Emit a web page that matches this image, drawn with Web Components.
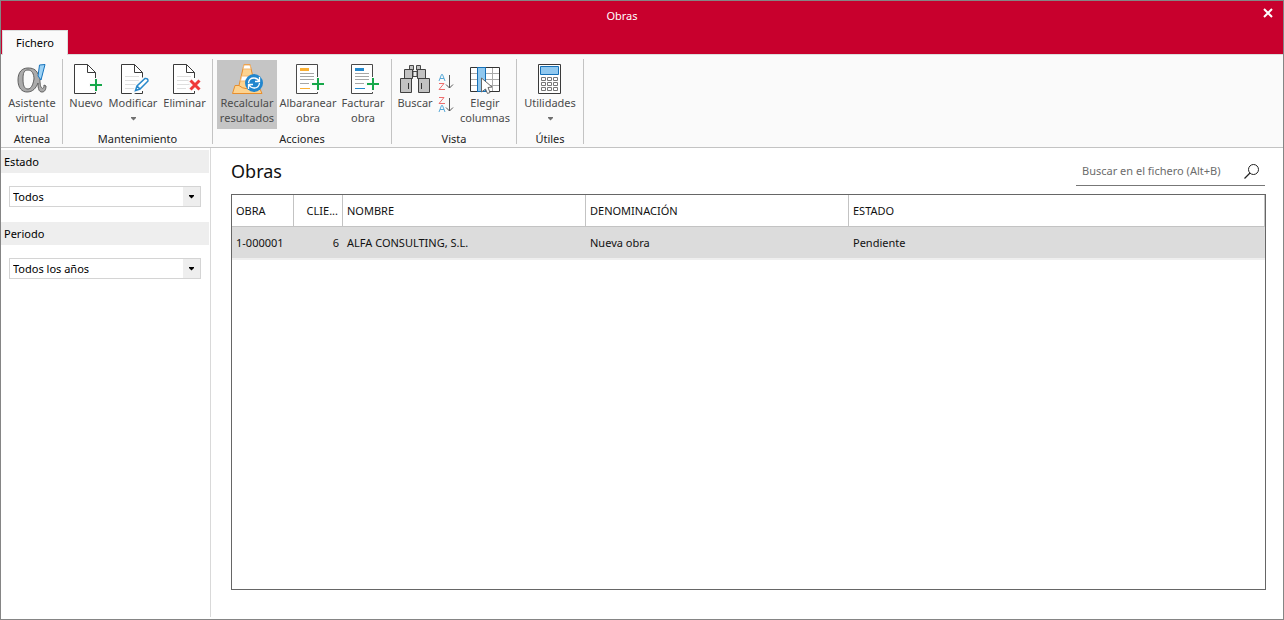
<!DOCTYPE html>
<html lang="es">
<head>
<meta charset="utf-8">
<meta name="viewport" content="width=device-width, initial-scale=1">
<title>Obras</title>
<style>
  html, body { height: 100%; margin: 0; }
  body {
    --brand: #c8002d;
    --line: #c3c3c3;
    --frame: #858585;
    font: 11px/15px "Noto Sans", "Open Sans", sans-serif;
    color: #111;
    background: #fff;
  }
</style>
</head>
<body>
<works-app></works-app>
<script>
const define = (name, html, setup) => {
  const template = document.createElement('template');
  template.innerHTML = html;
  customElements.define(name, class extends HTMLElement {
    constructor() {
      super();
      this.attachShadow({ mode: 'open' }).append(template.content.cloneNode(true));
    }
    connectedCallback() { if (setup) setup(this, this.shadowRoot); }
  });
};

const page = '<path d="M4.500 1.500H17.500L25.500 9.500V30.500H4.500Z" fill="#fff"/><path d="M25.500 15V9.500L17.500 1.500H4.500V30.500H25.500V28" fill="none" stroke="#3a3a3a"/><path d="M17.500 1.500V9.500H25.500" fill="none" stroke="#3a3a3a"/>';
const textLines = '<path d="M8 13.500H22M8 17.500H22M8 21.500H21M8 25.500H17" stroke="#dedede" fill="none"/>';
const invoice = (c) => `<path d="M25.500 18V1.500H4.500V30.500H25.500V26" fill="#fff" stroke="#4a4a4a"/><rect x="8" y="5" width="9" height="3" fill="${c}"/><path d="M8 10.500H22M8 13.500H22M8 16.500H22M8 20.500H17" stroke="#a6a6a6"/><path d="M8 25.500H18" stroke="${c}"/><path d="M26 14V29M18 21H33" stroke="#fafafa" stroke-width="4"/><path d="M26 15V27M20 21H32" stroke="#16a84a" stroke-width="2"/>`;

const icons = {
  close: [12, 12, '<path d="M2 2L10 10M10 2L2 10" stroke="#fff" stroke-width="2"/>'],
  alpha: [32, 32, '<path d="M22 11C20 6 16 5 12 5C6 5 2 9 2 17C2 25 6 29 11 29C17 29 20 25 22 20C22 26 23 29 26 29C29 29 30 26 30 23L28 22C28 25 27 26 26 25C24 24 24 19 24 16L25 11ZM12 7C16 7 18 11 18 16C17 22 15 26 12 26C8 26 7 22 7 16C7 10 8 7 12 7Z" fill="#ababab" stroke="#606060" fill-rule="evenodd"/><path d="M23.500 2L29 1.500L25 17L22 13Z" fill="#9dd2f5" stroke="#1673bd"/>'],
  new: [32, 32, page + '<path d="M26 15V29M19 22H32" stroke="#fafafa" stroke-width="4"/><path d="M26 16V28M20 22H32" stroke="#16a84a" stroke-width="2"/>'],
  edit: [32, 32, page + textLines + '<path d="M18 28L21 21L28 15L30 17L23 25Z" fill="#fff" stroke="#fafafa" stroke-width="4"/><path d="M18.500 27.500L20 23L28 15.500Q31 15 31 18L23 26ZM20 23L23 26" fill="#fff" stroke="#2788cb" stroke-width="1.500"/>'],
  delete: [32, 32, page + textLines + '<path d="M20 17L31 27M31 17L20 27" stroke="#fafafa" stroke-width="6"/><path d="M21.500 17.500L30.500 26.500M30.500 17.500L21.500 26.500" stroke="#ef3939" stroke-width="3"/>'],
  recalc: [32, 32, '<path d="M1.500 30.500L4 22.500H8L13 1.500H19L24 22.500L29 26L31 30.500Z" fill="#fdd38f" stroke="#e78e2d"/><path d="M13 2L12 6H20L19 2ZM10.500 13L9.500 18H23L22 13Z" fill="#fff" stroke="#f1b673"/><path d="M8 22.500Q14 28 24 24" fill="none" stroke="#e78e2d"/><circle cx="23" cy="20" r="9" fill="#2186ce"/><path d="M17.500 20Q18 15 23 15Q26 15 28 18M28.500 14V18.500H24M28.500 20Q28 25 23 25Q20 25 18 22M17.500 26V21.500H22" fill="none" stroke="#fff" stroke-width="1.300"/>'],
  delivery: [32, 32, invoice('#fbb034')],
  invoice: [32, 32, invoice('#2488cc')],
  binoculars: [32, 32, '<path d="M14 8.500H18V13.500H14Z" fill="#eee" stroke="#4a4a4a"/><path d="M10.500 2.500H14.500V7H10.500ZM17.500 2.500H21.500V7H17.500Z" fill="#c4c4c4" stroke="#4a4a4a"/><path d="M5.500 6.500H13.500V15.500H5.500ZM18.500 6.500H26.500V15.500H18.500ZM1.500 15.500H12.500V29.500H1.500ZM19.500 15.500H30.500V29.500H19.500Z" fill="#c2c2c2" stroke="#404040"/><path d="M9.500 20V26M22.500 20V26" stroke="#333"/>'],
  sortaz: [16, 18, '<path d="M1 7L3.500 0.500H4.500L7 7M2 4.500H6" fill="none" stroke="#58a9d8"/><path d="M1 9.500H6L1 15.500H7" fill="none" stroke="#ee6d6d"/><path d="M11.500 1V14M8 10.500L11.500 14L15 10.500" fill="none" stroke="#555"/>'],
  sortza: [16, 18, '<path d="M1 0.500H6L1 6.500H7" fill="none" stroke="#ee6d6d"/><path d="M1 15L3.500 8.500H4.500L7 15M2 12.500H6" fill="none" stroke="#58a9d8"/><path d="M11.500 1V14M8 10.500L11.500 14L15 10.500" fill="none" stroke="#555"/>'],
  columns: [32, 32, '<path d="M1.500 4.500H30.500V28.500H1.500Z" fill="#fff" stroke="#333"/><path d="M2 10.500H30M2 16.500H30M2 22.500H30M23.500 5V28" stroke="#aaa"/><path d="M8.500 4.500H16.500V28.500H8.500Z" fill="#90c8ef" stroke="#1570b8"/><path d="M12.500 15L23 24L19 24.500L21 29.500L18.500 30.500L16.500 26L12.500 29Z" fill="#fff" stroke="#666"/>'],
  calculator: [32, 32, '<path d="M4.500 1.500H26.500V30.500H4.500Z" fill="#fff" stroke="#3a3a3a"/><path d="M6.500 3.500H24.500V11.500H6.500Z" fill="#90c8ef" stroke="#1570b8"/><path d="M7.500 14.500H11.500V17.500H7.500ZM13.500 14.500H17.500V17.500H13.500ZM19.500 14.500H23.500V17.500H19.500ZM7.500 19.500H11.500V22.500H7.500ZM13.500 19.500H17.500V22.500H13.500ZM19.500 19.500H23.500V22.500H19.500ZM7.500 24.500H11.500V27.500H7.500ZM13.500 24.500H17.500V27.500H13.500ZM19.500 24.500H23.500V27.500H19.500Z" fill="none" stroke="#777"/>'],
  search: [18, 18, '<circle cx="10.500" cy="7.500" r="5" fill="none" stroke="#222"/><path d="M7 11L1.500 16.500" stroke="#222" stroke-width="1.200"/>'],
  caret: [7, 4, '<path d="M1 0H6V1L3.500 3.500L1 1Z" fill="currentColor"/>']
};

define('app-icon', `<style>:host{display:block;flex:none}svg{display:block;overflow:visible}</style><svg aria-hidden="true"></svg>`,
  (host, root) => {
    const [w, h, body] = icons[host.getAttribute('name')];
    const svg = root.querySelector('svg');
    svg.setAttribute('width', w);
    svg.setAttribute('height', h);
    svg.setAttribute('viewBox', `0 0 ${w} ${h}`);
    svg.innerHTML = body;
  });

define('title-bar', `<style>
  :host{display:grid;grid-template-columns:40px 1fr 40px 40px;height:29px;background:var(--brand);color:#fff}
  h1{grid-column:1 / 4;margin:0;font:inherit;line-height:29px;text-align:center}
  button{border:0;padding:0 9px 6px 0;background:none;display:flex;align-items:center;justify-content:flex-end}
</style><h1><slot></slot></h1><button aria-label="Cerrar"><app-icon name="close"></app-icon></button>`);

define('ribbon-tabs', `<style>
  :host{display:flex;height:24px;padding-left:1px;background:var(--brand);border-bottom:1px solid #ddd}
  button{box-sizing:border-box;height:25px;padding:0 0 2px;width:66px;border:1px solid #ddd;border-bottom:0;background:#fafafa;color:#000;font:inherit}
</style><div role="tablist"><button role="tab" aria-selected="true"><slot></slot></button></div>`);

define('ribbon-group', `<style>
  :host{display:flex;flex-direction:column;padding:0 4px;margin:4px 0 3px;border-right:1px solid var(--line)}
  div{display:flex;flex:none;height:74px;align-items:flex-start}
  h2{margin:0;font:inherit;line-height:11px;text-align:center;color:#222}
</style><div><slot></slot></div><h2></h2>`,
  (host, root) => { root.querySelector('h2').textContent = host.getAttribute('label'); });

define('ribbon-button', `<style>
  :host{display:block}
  button{box-sizing:border-box;width:100%;height:69px;margin-top:1px;padding:3px 0 0;border:0;background:none;font:inherit;color:#4b4b4b;display:flex;flex-direction:column;align-items:center;white-space:nowrap}
  :host([active]) button{background:#c5c5c5}
  span{display:block;text-align:center}
  .caret{margin-top:7px;color:#707070}
</style><button><span><slot></slot></span></button>`,
  (host, root) => {
    const button = root.querySelector('button');
    const icon = document.createElement('app-icon');
    icon.setAttribute('name', host.getAttribute('icon'));
    button.prepend(icon);
    if (host.hasAttribute('menu')) {
      const caret = document.createElement('app-icon');
      caret.setAttribute('name', 'caret');
      caret.className = 'caret';
      button.append(caret);
    }
  });

define('sort-buttons', `<style>
  :host{display:flex;flex-direction:column;align-items:center;gap:5px;padding-top:15px;width:24px}
  button{border:0;padding:0;background:none}
</style><button aria-label="Orden ascendente"><app-icon name="sortaz"></app-icon></button><button aria-label="Orden descendente"><app-icon name="sortza"></app-icon></button>`);

define('app-ribbon', `<style>
  :host{display:flex;background:#fafafa;border-bottom:1px solid var(--line);height:92px}
  .xs{width:38px}.s{width:47px}.m{width:48px}.l{width:54px}.menu{width:56px}.xl{width:58px}.xxl{width:62px}
  .active{width:60px}
  .first{padding:0 1px 0 2px}
</style>
<ribbon-group class="first" label="Atenea"><ribbon-button class="xl" icon="alpha">Asistente<br>virtual</ribbon-button></ribbon-group>
<ribbon-group label="Mantenimiento">
  <ribbon-button class="xs" icon="new">Nuevo</ribbon-button>
  <ribbon-button class="menu" icon="edit" menu>Modificar</ribbon-button>
  <ribbon-button class="s" icon="delete">Eliminar</ribbon-button>
</ribbon-group>
<ribbon-group label="Acciones">
  <ribbon-button class="active" icon="recalc" active>Recalcular<br>resultados</ribbon-button>
  <ribbon-button class="xxl" icon="delivery">Albaranear<br>obra</ribbon-button>
  <ribbon-button class="m" icon="invoice">Facturar<br>obra</ribbon-button>
</ribbon-group>
<ribbon-group label="Vista">
  <ribbon-button class="xs" icon="binoculars">Buscar</ribbon-button>
  <sort-buttons></sort-buttons>
  <ribbon-button class="l" icon="columns">Elegir<br>columnas</ribbon-button>
</ribbon-group>
<ribbon-group label="Útiles"><ribbon-button class="xl" icon="calculator" menu>Utilidades</ribbon-button></ribbon-group>`);

define('filter-field', `<style>
  :host{display:block;margin-bottom:14px}
  label{display:block;background:#eee;padding:4px 3px;line-height:15px;color:#000}
  .box{display:grid;grid-template-columns:1fr 17px;margin:13px 8px 0;border:1px solid #d4d4d4;height:19px}
  :host{margin-bottom:15px}
  select{grid-area:1 / 1 / 2 / 3;appearance:none;width:100%;border:0;border-radius:0;margin:0;padding:0 20px 0 3px;background:none;font:inherit;color:#000}
  .arrow{grid-area:1 / 2;background:#eee;display:grid;place-items:center;pointer-events:none;color:#000}
</style><label for="pick"></label><div class="box"><span class="arrow"><app-icon name="caret"></app-icon></span><select id="pick"><option></option></select></div>`,
  (host, root) => {
    root.querySelector('label').textContent = host.getAttribute('label');
    root.querySelector('option').textContent = host.getAttribute('value');
  });

define('filter-panel', `<style>
  :host{display:block;padding:2px 1px 0 0;border-right:1px solid #d9d9d9;margin-bottom:2px}
</style><filter-field label="Estado" value="Todos"></filter-field><filter-field label="Periodo" value="Todos los años"></filter-field>`);

define('search-box', `<style>
  :host{display:flex;align-items:center;width:189px;height:28px;border-bottom:1px solid #777}
  input{flex:1;min-width:0;border:0;padding:0 0 2px 6px;background:none;font:inherit;outline:0}
  input::placeholder{color:#6c6c6c;opacity:1}
  button{border:0;padding:0 4px 0 0;background:none}
</style><input type="search" aria-label="Buscar" placeholder="Buscar en el fichero (Alt+B)"><button aria-label="Buscar"><app-icon name="search"></app-icon></button>`);

define('works-table', `<style>
  :host{display:block;border:1px solid #666;background:#fff}
  table{width:100%;table-layout:fixed;border-collapse:separate;border-spacing:0}
  th,td{box-sizing:border-box;padding:0 4px;text-align:left;font-weight:400;white-space:nowrap;overflow:hidden;text-overflow:ellipsis}
  th{height:32px;border-right:1px solid var(--line);border-bottom:1px solid var(--line)}
  td{height:33px;background:#dcdcdc;border-bottom:2px solid #efefef}
  .num{text-align:right}
  .c1{width:62px}.c2{width:49px}.c3{width:243px}.c4{width:263px}
</style>
<table>
  <colgroup><col class="c1"><col class="c2"><col class="c3"><col class="c4"><col></colgroup>
  <thead><tr><th>OBRA</th><th class="num">CLIE...</th><th>NOMBRE</th><th>DENOMINACIÓN</th><th>ESTADO</th></tr></thead>
  <tbody><tr><td>1-000001</td><td class="num">6</td><td>ALFA CONSULTING, S.L.</td><td>Nueva obra</td><td>Pendiente</td></tr></tbody>
</table>`);

define('works-view', `<style>
  :host{display:flex;flex-direction:column;padding:9px 17px 29px 20px;min-width:0}
  header{display:flex;justify-content:space-between;align-items:flex-start;padding-right:1px;margin-bottom:8px}
  h2{margin:0;font-size:18px;line-height:28px;font-weight:400}
  works-table{flex:1}
</style><header><h2>Obras</h2><search-box></search-box></header><works-table></works-table>`);

define('works-app', `<style>
  :host{box-sizing:border-box;min-height:100vh;display:flex;flex-direction:column;border:1px solid var(--frame);background:#fff}
  main{flex:1;display:grid;grid-template-columns:210px 1fr}
</style>
<title-bar>Obras</title-bar>
<ribbon-tabs>Fichero</ribbon-tabs>
<app-ribbon></app-ribbon>
<main><filter-panel></filter-panel><works-view></works-view></main>`);
</script>
</body>
</html>
